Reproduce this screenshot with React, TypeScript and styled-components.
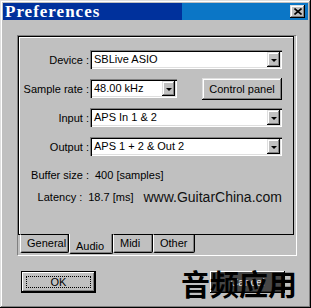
import styled, { createGlobalStyle } from 'styled-components'

const GlobalStyle = createGlobalStyle`
  html, body {
    margin: 0;
    padding: 0;
    background: #c0c0c0;
  }
  body {
    font-family: 'Liberation Sans', Arial, sans-serif;
    font-size: 11px;
    color: #000;
  }
  * {
    box-sizing: border-box;
  }
`

const raised = `
  box-shadow: inset -1px -1px #000, inset 1px 1px #dfdfdf, inset -2px -2px #808080, inset 2px 2px #fff;
`

const Window = styled.div`
  width: 311px;
  height: 308px;
  padding: 3px;
  background: #c0c0c0;
  ${raised}
  display: flex;
  flex-direction: column;
`

const TitleBar = styled.div`
  height: 17px;
  display: flex;
  align-items: center;
  justify-content: space-between;
  padding: 0 3px 0 2px;
  background: linear-gradient(to right, #00319c 0, #00319c 179px, #0b76c6 179px);
`

const Title = styled.span`
  color: #fff;
  font-family: 'Liberation Serif', 'Times New Roman', serif;
  font-weight: bold;
  font-size: 17px;
  letter-spacing: 1px;
  line-height: 17px;
`

const CloseButton = styled.div`
  width: 15px;
  height: 13px;
  background: #c0c0c0;
  ${raised}
  display: flex;
  align-items: center;
  justify-content: center;
`

const Frame = styled.div`
  margin: 15px 0 0 14px;
  width: 280px;
  height: 221px;
  border: 1px solid;
  border-color: #808080 #fff #fff #808080;
  display: flex;
  flex-direction: column;
`

const Pane = styled.div`
  width: 276px;
  height: 199px;
  border: 1px solid #000;
  box-shadow: inset 1px 1px #fff;
  padding: 13px 11px 0 0;
  display: flex;
  flex-direction: column;
`

const Form = styled.div`
  display: flex;
  flex-direction: column;
  gap: 10px;
`

const Row = styled.div`
  display: flex;
  align-items: center;
  height: 19px;
`

const Label = styled.span`
  width: 70px;
  margin-right: 1px;
  text-align: right;
  white-space: nowrap;
  line-height: 14px;
`

const Combo = styled.div<{ $width?: number }>`
  width: ${p => p.$width ?? 192}px;
  height: 19px;
  padding: 2px;
  background: #fff;
  display: flex;
  box-shadow: inset 1px 1px #808080, inset 2px 2px #000, inset -1px -1px #fff, inset -2px -2px #dfdfdf;
`

const ComboText = styled.span`
  flex: 1;
  padding-left: 2px;
  line-height: 15px;
  white-space: nowrap;
  overflow: hidden;
`

const ArrowButton = styled.span`
  width: 13px;
  background: #c0c0c0;
  ${raised}
  display: flex;
  align-items: center;
  justify-content: center;
`

const Caret = styled.span`
  width: 0;
  height: 0;
  margin-top: 1px;
  border-left: 3px solid transparent;
  border-right: 3px solid transparent;
  border-top: 3px solid #000;
`

const PushButton = styled.div`
  margin-left: auto;
  width: 80px;
  height: 22px;
  background: #c0c0c0;
  ${raised}
  display: flex;
  align-items: center;
  justify-content: center;
  white-space: nowrap;
`

const InfoList = styled.div`
  margin-top: 12px;
  display: flex;
  flex-direction: column;
  gap: 8px;
`

const InfoRow = styled.div`
  display: flex;
  align-items: center;
  height: 14px;
`

const Value = styled.span`
  padding-left: 5px;
  white-space: nowrap;
`

const Url = styled.span`
  margin-left: 10px;
  font-size: 14px;
  color: #111;
  white-space: nowrap;
`

const TabStrip = styled.div`
  display: flex;
  align-items: flex-start;
  margin: -1px 0 0 2px;
`

const Tab = styled.div<{ $width: number; $active?: boolean }>`
  position: relative;
  z-index: ${p => (p.$active ? 1 : 0)};
  width: ${p => p.$width}px;
  height: ${p => (p.$active ? 20 : 19)}px;
  padding: ${p => (p.$active ? 5 : 1)}px 0 0 6px;
  background: #c0c0c0;
  border-left: 1px solid #fff;
  border-right: 1px solid #000;
  border-bottom: 1px solid #000;
  border-top: ${p => (p.$active ? 'none' : '1px solid #000')};
  border-radius: 0 0 2px 2px;
  box-shadow: inset -1px -1px #808080;
  line-height: 14px;
  white-space: nowrap;
`

const ButtonRow = styled.div`
  position: relative;
  display: flex;
  margin: 15px 0 0 18px;
  height: 22px;
`

const OkButton = styled.div`
  width: 75px;
  height: 22px;
  padding: 4px;
  border: 1px solid #000;
  background: #c0c0c0;
  box-shadow: inset -1px -1px #000, inset 1px 1px #fff, inset -2px -2px #808080;
  display: flex;
`

const FocusRing = styled.div`
  flex: 1;
  border: 1px dotted #000;
  display: flex;
  align-items: center;
  justify-content: center;
  line-height: 12px;
`

const CancelButton = styled.div`
  margin-left: 114px;
  width: 75px;
  height: 22px;
  background: #474747;
  color: #e6e6e6;
  box-shadow: inset -1px -1px #000, inset 1px 1px #fff, inset -2px -2px #2a2a2a;
  display: flex;
  align-items: center;
  justify-content: center;
`

const Watermark = styled.div`
  position: absolute;
  left: 160px;
  top: -2px;
  font-family: 'Noto Sans CJK SC', sans-serif;
  font-weight: 700;
  font-size: 29px;
  line-height: 29px;
  color: #000;
  white-space: nowrap;
  pointer-events: none;
`

type ComboProps = { value: string; width?: number }

const ComboBox = ({ value, width }: ComboProps) => (
  <Combo $width={width}>
    <ComboText>{value}</ComboText>
    <ArrowButton>
      <Caret />
    </ArrowButton>
  </Combo>
)

const tabs = [
  { name: 'General', width: 49 },
  { name: 'Audio', width: 44, active: true },
  { name: 'Midi', width: 40 },
  { name: 'Other', width: 42 },
]

const App = () => (
  <>
    <GlobalStyle />
    <Window>
      <TitleBar>
        <Title>Preferences</Title>
        <CloseButton>
          <svg width="8" height="7" viewBox="0 0 8 7">
            <path d="M0.5 0.5 L7.5 6.5 M7.5 0.5 L0.5 6.5" stroke="#000" strokeWidth="1.6" />
          </svg>
        </CloseButton>
      </TitleBar>

      <Frame>
        <Pane>
          <Form>
            <Row>
              <Label>Device :</Label>
              <ComboBox value="SBLive ASIO" />
            </Row>
            <Row>
              <Label>Sample rate :</Label>
              <ComboBox value="48.00 kHz" width={87} />
              <PushButton>Control panel</PushButton>
            </Row>
            <Row>
              <Label>Input :</Label>
              <ComboBox value="APS In 1 & 2" />
            </Row>
            <Row>
              <Label>Output :</Label>
              <ComboBox value="APS 1 + 2 & Out 2" />
            </Row>
          </Form>
          <InfoList>
            <InfoRow>
              <Label>Buffer size :</Label>
              <Value>400 [samples]</Value>
            </InfoRow>
            <InfoRow>
              <Label>Latency :</Label>
              <Value>18.7 [ms]</Value>
              <Url>www.GuitarChina.com</Url>
            </InfoRow>
          </InfoList>
        </Pane>
        <TabStrip>
          {tabs.map(t => (
            <Tab key={t.name} $width={t.width} $active={t.active}>
              {t.name}
            </Tab>
          ))}
        </TabStrip>
      </Frame>

      <ButtonRow>
        <OkButton>
          <FocusRing>OK</FocusRing>
        </OkButton>
        <CancelButton>Cancel</CancelButton>
        <Watermark>音频应用</Watermark>
      </ButtonRow>
    </Window>
  </>
)

export default App
